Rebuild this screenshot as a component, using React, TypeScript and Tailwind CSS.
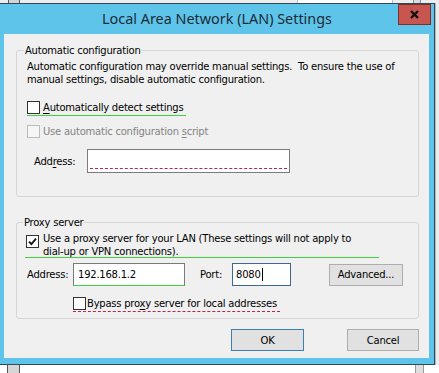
import type { ReactNode } from 'react';

function CheckBox({ checked = false, disabled = false }: { checked?: boolean; disabled?: boolean }) {
  return (
    <span
      className={`flex h-[13px] w-[13px] shrink-0 items-center justify-center border ${
        disabled ? 'border-[#bcbcbc] bg-[#f6f6f6]' : 'border-[#333333] bg-white'
      }`}
    >
      {checked && (
        <svg width="9" height="9" viewBox="0 0 9 9">
          <path d="M1 4.6 L3.4 7 L8 1.6" fill="none" stroke="#141414" strokeWidth="1.9" />
        </svg>
      )}
    </span>
  );
}

function Btn({ children, isDefault = false, width }: { children: ReactNode; isDefault?: boolean; width: string }) {
  return (
    <div
      className={`flex h-[22px] items-center justify-center border bg-[#e1e1e1] ${width} ${
        isDefault ? 'border-[#3c7fb1]' : 'border-[#adadad]'
      }`}
    >
      {children}
    </div>
  );
}

export default function App() {
  return (
    <div className="flex h-[373px] w-[439px] flex-col overflow-hidden whitespace-nowrap bg-white font-['DejaVu_Sans',sans-serif] text-[10px] leading-[13px] tracking-[-0.23px] text-black">
      {/* strip of the screen above the dialog */}
      <div className="flex h-[3px] shrink-0 bg-[#ededed]">
        <div className="ml-[8px] w-[12px] border-x border-[#5a5a5a] bg-[#d4d4d4]" />
        <div className="ml-[277px] w-[96px] border-x border-[#b9b9b9] bg-white" />
        <div className="ml-[20px] w-[8px] border-x border-[#8a8a8a] bg-[#dcdcdc]" />
      </div>

      <div className="flex shrink-0">
        {/* dialog window */}
        <div className="w-[435px] border-y border-r border-[#2a4a5e] bg-[#5ec4ea] pb-[6px]">
          <div className="relative flex h-[30px] items-center justify-center">
            <span className="font-['Noto_Sans',sans-serif] text-[14.4px] leading-[20px] tracking-normal text-[#1c2c37]">
              Local Area Network (LAN) Settings
            </span>
            <div className="absolute right-[3px] top-0 flex h-[21px] w-[33px] items-center justify-center border border-[#7d2f2b] bg-[#c75550]">
              <svg width="9" height="9" viewBox="0 0 9 9">
                <path d="M1 1 L8 8 M8 1 L1 8" stroke="#111111" strokeWidth="2.4" />
              </svg>
            </div>
          </div>

          <div className="ml-[4px] mr-[5px] h-[324px] bg-[#f0f0f0] pl-[12px] pr-[10px] pt-[10px]">
            {/* Automatic configuration */}
            <fieldset className="rounded-[3px] border border-[#d5d5d5]">
              <legend className="ml-[7px] px-[1px]">Automatic configuration</legend>
              <div className="pb-[23px] pl-[10px]">
                <p className="pt-[3px] whitespace-pre">
                  {'Automatic configuration may override manual settings.  To ensure the use of'}
                  <br />
                  manual settings, disable automatic configuration.
                </p>
                <div className="mt-[15px] flex w-[159px] items-center gap-[3px] border-b border-[#3fd13f] pb-[1px]">
                  <CheckBox />
                  <span>
                    <span className="underline underline-offset-2">A</span>utomatically detect settings
                  </span>
                </div>
                <div className="mt-[9px] flex items-center gap-[3px] text-[#838383]">
                  <CheckBox disabled />
                  <span>
                    Use automatic configuration <span className="underline underline-offset-2">s</span>cript
                  </span>
                </div>
                <div className="mt-[11px] flex items-center">
                  <span className="ml-[7px] w-[53px]">
                    Add<span className="underline underline-offset-2">r</span>ess:
                  </span>
                  <div className="flex h-[24px] w-[203px] flex-col justify-end border border-[#7a7a7a] bg-white px-[2px] pb-[3px]">
                    <div className="border-b border-dashed border-[#b4264c]" />
                  </div>
                </div>
              </div>
            </fieldset>

            {/* Proxy server */}
            <fieldset className="mt-[19px] rounded-[3px] border border-[#d5d5d5]">
              <legend className="ml-[6px] px-[1px]">Proxy server</legend>
              <div className="pb-[6px] pl-[10px]">
                <div className="-ml-[2px] mt-[2px] flex h-[27px] w-[354px] items-start gap-[4px] border-b border-[#3fd13f] pl-[1px]">
                  <span className="mt-[4px]">
                    <CheckBox checked />
                  </span>
                  <span className="pt-[1px]">
                    Use a proxy server for your LAN (These settings will not apply to
                    <br />
                    dial-up or VPN connections).
                  </span>
                </div>
                <div className="mt-[5px] flex h-[23px] items-center">
                  <span className="w-[46px]">Address:</span>
                  <div className="flex h-[23px] w-[112px] items-center border border-[#7a7a7a] border-b-[#3fd13f] bg-white pl-[4px]">
                    192.168.1.2
                  </div>
                  <span className="ml-[15px] w-[32px]">Port:</span>
                  <div className="flex h-[23px] w-[59px] items-center border border-[#3d6a8c] bg-white pl-[3px]">
                    8080
                    <span className="ml-[1px] h-[13px] w-[1px] bg-black" />
                  </div>
                  <div className="ml-[38px]">
                    <Btn width="w-[74px]">Advanced...</Btn>
                  </div>
                </div>
                <div className="ml-[46px] mt-[11px] flex w-[207px] items-center gap-[1px] border-b border-dashed border-[#b4264c] pb-[1px]">
                  <CheckBox />
                  <span>
                    Bypass pro<span className="underline underline-offset-2">x</span>y server for local addresses
                  </span>
                </div>
              </div>
            </fieldset>

            <div className="mt-[10px] flex justify-end gap-[43px]">
              <Btn isDefault width="w-[73px]">
                OK
              </Btn>
              <Btn width="w-[72px]">Cancel</Btn>
            </div>
          </div>
        </div>
        <div className="w-[4px] border-l border-[#b8b8b8] bg-[#ececec]" />
      </div>

      {/* strip of the screen below the dialog */}
      <div className="flex flex-1 bg-white">
        <div className="ml-[7px] w-[13px] border-x border-[#555555] bg-[#d6d6d6]" />
        <div className="ml-[395px] w-[9px] border-x border-[#9a9a9a] bg-[#dedede]" />
      </div>
    </div>
  );
}
